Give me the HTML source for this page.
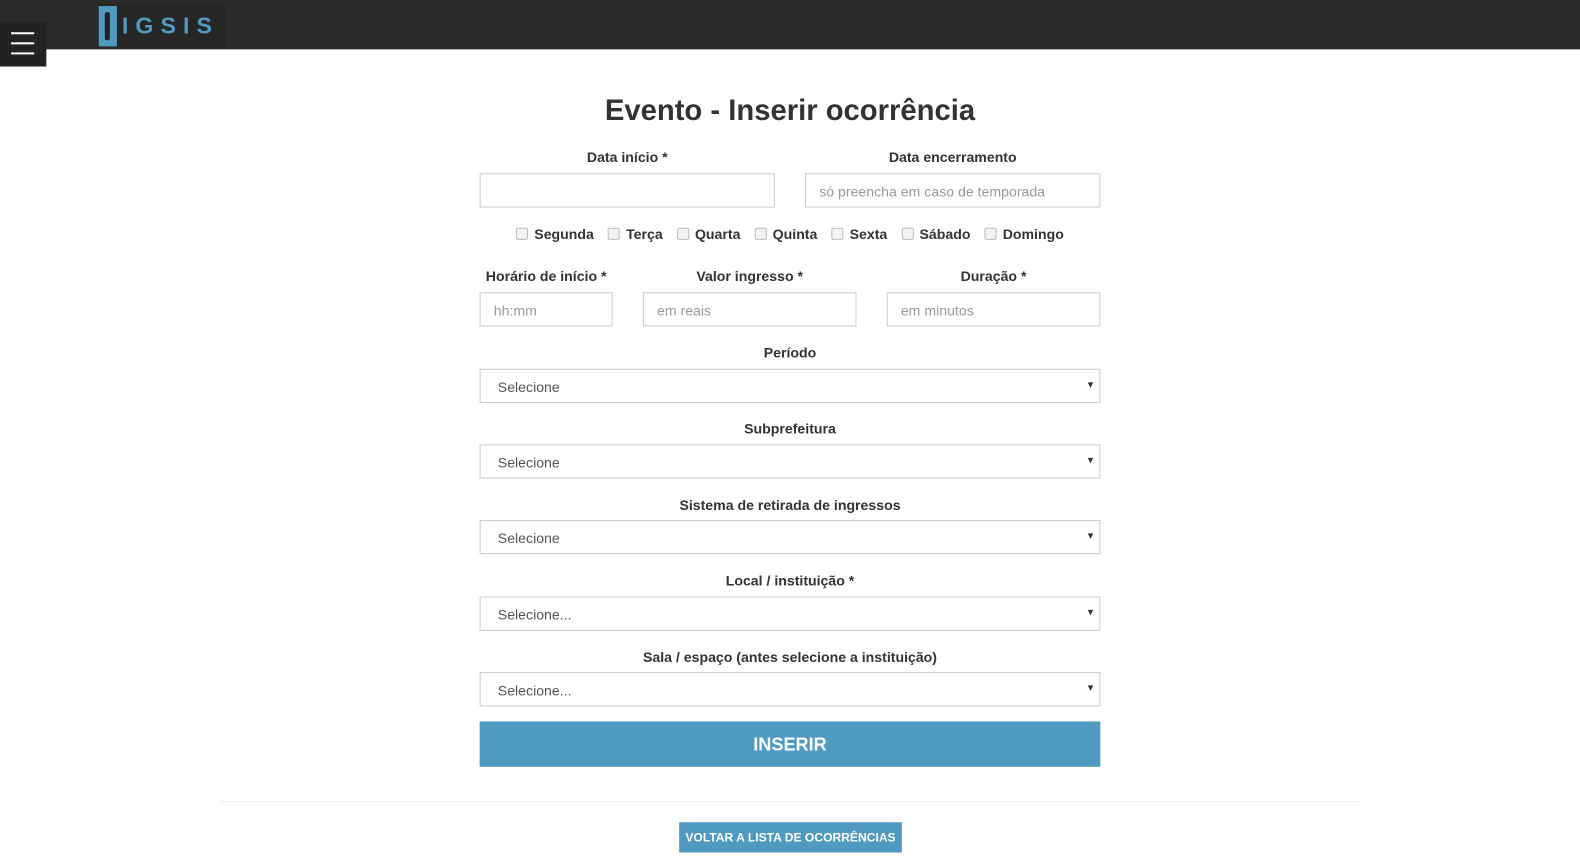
<!DOCTYPE html><html><head><style>
*{box-sizing:border-box;margin:0;padding:0}
body{width:1580px;height:855px;background:#fff;font-family:"Liberation Sans",sans-serif;color:#333;position:relative;overflow:hidden}
#w{position:absolute;left:0;top:0;width:1568px;height:849px;transform:scale(1.00765);transform-origin:0 0}
.a{position:absolute}
.lbl{position:absolute;font-weight:bold;font-size:14px;text-align:center;color:#333;margin-top:1px}
.in{position:absolute;height:34px;border:1px solid #ccc;background:#fff;font-size:14px;color:#999;padding:9px 13px 7px}
.sel{color:#555;padding-left:17px}
.sel:after{content:"▾";position:absolute;right:6px;top:8px;font-size:11px;color:#333}
.cb{display:inline-block;width:12px;height:12px;border:1px solid #bbb;border-radius:2px;background:#f3f3f3;margin:0 6px 0 0;vertical-align:-1px}
.days{position:absolute;top:224px;left:476px;width:616px;text-align:center;font-weight:bold;font-size:14px}
.days span{margin:0 7px}
</style></head><body><div id="w">
<div class="a" style="left:0;top:0;width:1568px;height:49px;background:#2b2b2b"></div>
<div class="a" style="left:0;top:22px;width:46px;height:44px;background:#222"></div>
<div class="a" style="left:11px;top:32px;width:23px;height:2px;background:#fff"></div>
<div class="a" style="left:11px;top:42px;width:23px;height:2px;background:#fff"></div>
<div class="a" style="left:11px;top:52px;width:23px;height:2px;background:#fff"></div>
<div class="a" style="left:97px;top:4px;width:127px;height:43px;background:#262626"></div>
<div class="a" style="left:98px;top:6px;width:18px;height:40px;background:#4e9ac0"></div>
<div class="a" style="left:104px;top:12px;width:5px;height:28px;background:#222;border-radius:2px"></div>
<div class="a" style="left:121px;top:12px;font-size:23px;font-weight:bold;color:#4e9ac0;letter-spacing:7px">IGSIS</div>
<div class="a" style="left:0;width:1568px;top:94px;text-align:center;font-size:29px;font-weight:bold;color:#333">Evento - Inserir ocorrência</div>
<div class="lbl" style="left:476px;width:293px;top:147px">Data início *</div>
<div class="lbl" style="left:799px;width:293px;top:147px">Data encerramento</div>
<div class="in" style="left:476px;top:172px;width:293px"></div>
<div class="in" style="left:799px;top:172px;width:293px">só preencha em caso de temporada</div>
<div class="days"><span><i class="cb"></i>Segunda</span><span><i class="cb"></i>Terça</span><span><i class="cb"></i>Quarta</span><span><i class="cb"></i>Quinta</span><span><i class="cb"></i>Sexta</span><span><i class="cb"></i>Sábado</span><span><i class="cb"></i>Domingo</span></div>
<div class="lbl" style="left:476px;width:132px;top:265px">Horário de início *</div>
<div class="lbl" style="left:638px;width:212px;top:265px">Valor ingresso *</div>
<div class="lbl" style="left:880px;width:212px;top:265px">Duração *</div>
<div class="in" style="left:476px;top:290px;width:132px">hh:mm</div>
<div class="in" style="left:638px;top:290px;width:212px">em reais</div>
<div class="in" style="left:880px;top:290px;width:212px">em minutos</div>
<div class="lbl" style="left:476px;width:616px;top:341px">Período</div>
<div class="in sel" style="left:476px;top:366px;width:616px">Selecione</div>
<div class="lbl" style="left:476px;width:616px;top:416px">Subprefeitura</div>
<div class="in sel" style="left:476px;top:441px;width:616px">Selecione</div>
<div class="lbl" style="left:476px;width:616px;top:492px">Sistema de retirada de ingressos</div>
<div class="in sel" style="left:476px;top:516px;width:616px">Selecione</div>
<div class="lbl" style="left:476px;width:616px;top:567px">Local / instituição *</div>
<div class="in sel" style="left:476px;top:592px;width:616px">Selecione...</div>
<div class="lbl" style="left:476px;width:616px;top:643px">Sala / espaço (antes selecione a instituição)</div>
<div class="in sel" style="left:476px;top:667px;width:616px">Selecione...</div>
<div class="a" style="left:476px;top:716px;width:616px;height:45px;background:#4e9ac0;color:#fff;font-weight:bold;font-size:18px;text-align:center;line-height:46px">INSERIR</div>
<div class="a" style="left:218px;top:795px;width:1132px;height:1px;background:#eee"></div>
<div class="a" style="left:674px;top:816px;width:221px;height:30px;background:#4e9ac0;color:#fff;font-weight:bold;font-size:12px;text-align:center;line-height:30px">VOLTAR A LISTA DE OCORRÊNCIAS</div>
</div></body></html>
